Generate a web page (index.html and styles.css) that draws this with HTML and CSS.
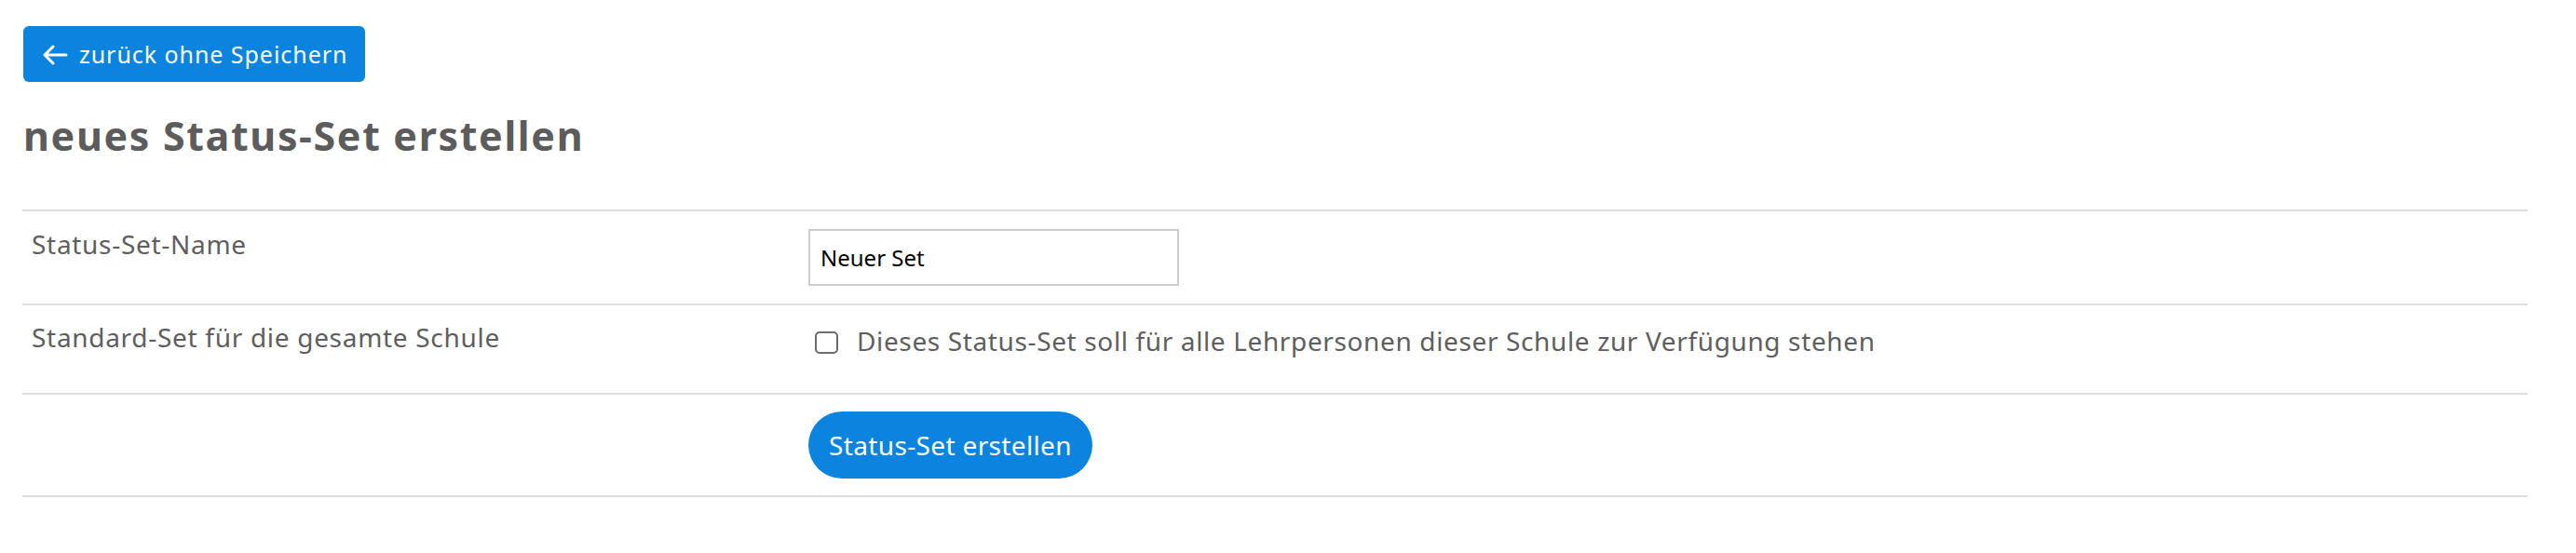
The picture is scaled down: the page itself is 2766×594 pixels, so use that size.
FILE: index.html
```html
<!DOCTYPE html>
<html lang="de">
<head>
<meta charset="utf-8">
<title>neues Status-Set erstellen</title>
<link rel="stylesheet" href="styles.css">
</head>
<body>
<div class="page">
  <a class="btn-back" href="#">
    <svg class="arrow" viewBox="0 0 28 22" width="28" height="22" aria-hidden="true"><path d="M26 11H3M12 2L3 11l9 9" fill="none" stroke="#fff" stroke-width="3" stroke-linecap="round" stroke-linejoin="round"/></svg>
    <span>zurück ohne Speichern</span>
  </a>
  <h1 class="title">neues Status-Set erstellen</h1>
  <div class="form-table">
    <div class="row row-name">
      <div class="cell label">Status-Set-Name</div>
      <div class="cell field"><input class="text-input" type="text" value="Neuer Set"></div>
    </div>
    <div class="row row-std">
      <div class="cell label">Standard-Set für die gesamte Schule</div>
      <div class="cell field check-cell">
        <label class="check"><input class="checkbox" type="checkbox"><span>Dieses Status-Set soll für alle Lehrpersonen dieser Schule zur Verfügung stehen</span></label>
      </div>
    </div>
    <div class="row row-submit">
      <div class="cell label"></div>
      <div class="cell field"><button class="btn-submit" type="button">Status-Set erstellen</button></div>
    </div>
  </div>
</div>
</body>
</html>
```
FILE: styles.css
```css
html, body {
  margin: 0;
  padding: 0;
  background: #ffffff;
}
body {
  font-family: "Noto Sans", "Open Sans", sans-serif;
  color: #5c5c5c;
}
.page {
  padding: 28px 52px 0 24px;
}
.btn-back {
  display: inline-flex;
  align-items: center;
  gap: 12px;
  box-sizing: border-box;
  height: 60px;
  width: 367px;
  padding: 0 18px 0 20px;
  background: #0a84de;
  color: #ffffff;
  border-radius: 6px;
  text-decoration: none;
  font-size: 25px;
  letter-spacing: 0.95px;
  line-height: 1;
  white-space: nowrap;
  margin-left: 1px;
}
.arrow {
  flex: none;
  margin-top: 2px;
}
.title {
  margin: 33px 0 0 0;
  font-size: 43px;
  letter-spacing: 1.65px;
  line-height: 50px;
  font-weight: 700;
  color: #5c5c5c;
  height: 50px;
  padding-left: 1px;
}
.form-table {
  margin-top: 54px;
  border-bottom: 2px solid #dedede;
}
.row {
  display: grid;
  grid-template-columns: 834px 1fr;
  border-top: 2px solid #dedede;
}
.cell {
  box-sizing: border-box;
  padding-left: 10px;
}
.label {
  font-size: 28px;
  letter-spacing: 0.7px;
  line-height: 42px;
  color: #5e5e5e;
  white-space: nowrap;
}
.row-name .label { padding-top: 14px; }
.row-name .field { padding: 19px 0 19px 10px; }
.row-std .label { padding-top: 13px; }
.row-std .field { padding: 17px 0 35px 17px; }
.row-submit .field { padding: 18px 0 18px 10px; }
.row-submit .label { padding: 0; }
.text-input {
  display: block;
  box-sizing: border-box;
  width: 398px;
  height: 61px;
  border: 2px solid #cccccc;
  border-radius: 0;
  padding: 0 11px;
  font-family: "Noto Sans", "Open Sans", sans-serif;
  font-size: 24px;
  color: #000000;
  background: #ffffff;
  outline: none;
}
.check {
  display: flex;
  align-items: center;
  gap: 20px;
  font-size: 28px;
  letter-spacing: 0.63px;
  line-height: 42px;
  color: #5e5e5e;
  white-space: nowrap;
}
.checkbox {
  appearance: none;
  -webkit-appearance: none;
  margin: 0;
  flex: none;
  box-sizing: border-box;
  width: 25px;
  height: 24px;
  border: 2px solid #6a6a6a;
  border-radius: 5px;
  background: #ffffff;
  position: relative;
  top: 2px;
}
.btn-submit {
  display: block;
  box-sizing: border-box;
  height: 72px;
  width: 305px;
  padding: 0;
  border: none;
  border-radius: 36px;
  background: #0a84de;
  color: #ffffff;
  font-family: "Noto Sans", "Open Sans", sans-serif;
  font-size: 28px;
  letter-spacing: 0.35px;
  white-space: nowrap;
}
```
